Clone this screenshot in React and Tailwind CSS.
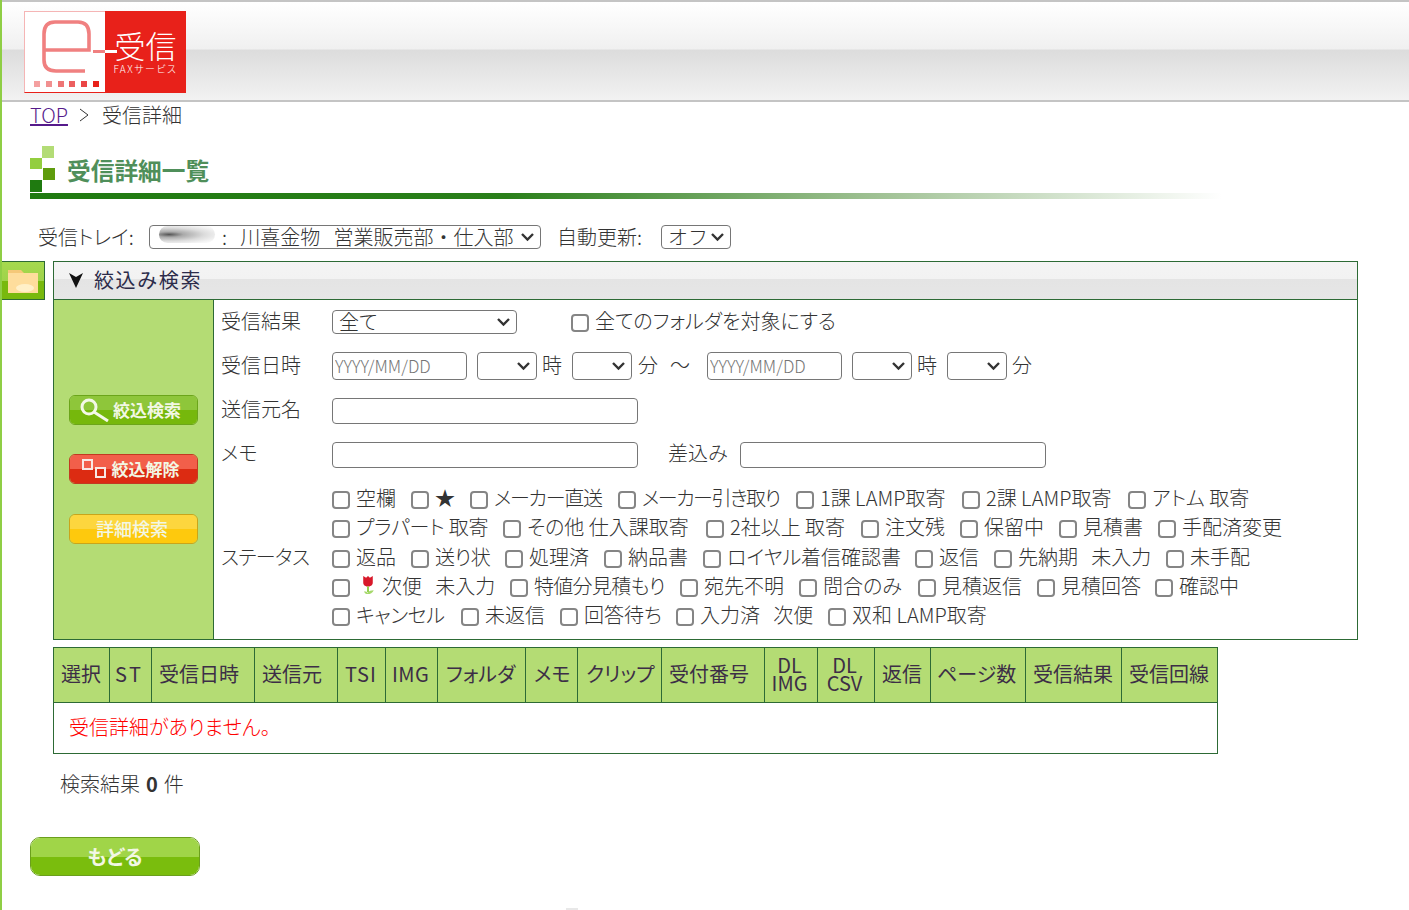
import React from "react";

const jp = "[font-family:'Noto_Sans_CJK_JP','Noto_Sans_CJK_SC',sans-serif] [font-feature-settings:'palt']";

function Sel({ w, children, h = "h-[24px]", pl = "pl-[6px]", cls = "" }) {
  return (
    <span className={`relative inline-flex shrink-0 ${w} ${h}`}>
      <select className={`w-full h-full appearance-none bg-white border border-[#767676] rounded-[4px] ${pl} ${cls} text-[20px] leading-none text-[#333]`}>
        {children}
      </select>
      <svg className="absolute right-[7px] top-1/2 -translate-y-1/2 w-[13px] h-[9px] pointer-events-none" viewBox="0 0 13 9" fill="none" stroke="#333" strokeWidth="2.4">
        <path d="M1 1.5 L6.5 7 L12 1.5" />
      </svg>
    </span>
  );
}

function Check({ label, gap = "gap-[6px]" }) {
  return (
    <label className={`flex items-center ${gap} whitespace-pre`}>
      <input type="checkbox" className="appearance-none w-[18px] h-[18px] mt-[4px] border-2 border-[#858585] rounded-[4px] bg-white shrink-0" />
      {label}
    </label>
  );
}

function Tulip() {
  return (
    <svg viewBox="0 0 14 22" className="w-[14px] h-[21px]">
      <path d="M2 1 L5 3 L7 1 L9 3 L12 1 L12 8 C12 11 9 12 7 12 C5 12 2 11 2 8 Z" fill="#d8192a" />
      <rect x="6" y="12" width="2" height="6" fill="#8fce45" />
      <path d="M7 20 C9 20 12 19 13 16 C10 16 8 17 7 18 Z" fill="#a5d86a" />
      <path d="M7 20 C5 20 3 19 3 17 C5 17 6 18 7 19 Z" fill="#a5d86a" />
    </svg>
  );
}

const rows = [
  [["空欄", "w-[79px]"], ["★", "w-[59px]"], ["メーカー直送", "w-[148px]", "tracking-[-1.3px]"], ["メーカー引き取り", "w-[178px]", "tracking-[-1.5px]"], ["1課 LAMP取寄", "w-[166px]"], ["2課 LAMP取寄", "w-[166px]"], ["アトム 取寄", "w-[130px]"]],
  [["プラパート 取寄", "w-[171px]", "tracking-[-0.2px]"], ["その他 仕入課取寄", "w-[203px]"], ["2社以上 取寄", "w-[155px]"], ["注文残", "w-[99px]"], ["保留中", "w-[99px]"], ["見積書", "w-[99px]"], ["手配済変更", "w-[130px]"]],
  [["返品", "w-[79px]"], ["送り状", "w-[94px]", "tracking-[-0.5px]"], ["処理済", "w-[99px]"], ["納品書", "w-[99px]"], ["ロイヤル着信確認書", "w-[212px]"], ["返信", "w-[79px]"], ["先納期   未入力", "w-[172px]"], ["未手配", "w-[90px]"]],
  [["TULIP", "w-[178px]"], ["特値分見積もり", "w-[170px]", "tracking-[-0.7px]"], ["宛先不明", "w-[119px]"], ["問合のみ", "w-[119px]"], ["見積返信", "w-[119px]"], ["見積回答", "w-[118px]"], ["確認中", "w-[90px]"]],
  [["キャンセル", "w-[129px]", "tracking-[-0.4px]"], ["未返信", "w-[99px]"], ["回答待ち", "w-[116px]"], ["入力済   次便", "w-[152px]"], ["双和 LAMP取寄", "w-[170px]"]],
];

const cols = [
  ["選択", "w-[56px] pl-[7px] justify-start"],
  ["ST", "w-[42px] pl-[5px] justify-start tracking-[2.5px]"],
  ["受信日時", "w-[103px] pl-[7px] justify-start"],
  ["送信元", "w-[83px] pl-[7px] justify-start"],
  ["TSI", "w-[48px] pl-[7px] justify-start tracking-[1px]"],
  ["IMG", "w-[52px] pl-[6px] justify-start tracking-[0.5px]"],
  ["フォルダ", "w-[88px] pl-[8px] justify-start"],
  ["メモ", "w-[52px] pl-[8px] justify-start"],
  ["クリップ", "w-[84px] pl-[8px] justify-start"],
  ["受付番号", "w-[103px] pl-[7px] justify-start"],
  ["DL\nIMG", "w-[53px] justify-center pr-[3px]"],
  ["DL\nCSV", "w-[57px] justify-center pr-[3px]"],
  ["返信", "w-[56px] pl-[7px] justify-start"],
  ["ページ数", "w-[95px] pl-[6px] justify-start"],
  ["受信結果", "w-[96px] pl-[7px] justify-start"],
  ["受信回線", "w-[96px] pl-[7px] justify-start"],
];

function GlossBtn({ w, h, top, bottom, border, children, cls = "", inner = "" }) {
  return (
    <button className={`relative flex items-center justify-center ${w} ${h} rounded-[6px] border ${border} overflow-hidden ${cls}`}>
      <span className={`absolute inset-x-0 top-0 h-1/2 ${top}`} />
      <span className={`absolute inset-x-0 bottom-0 h-1/2 ${bottom}`} />
      <span className={`relative flex items-center justify-center font-bold text-[#f2f7e4] ${inner}`}>{children}</span>
    </button>
  );
}

export default function App() {
  return (
    <div className={`${jp} relative w-[1409px] h-[910px] overflow-hidden bg-white border-l-2 border-[#8fce45] text-[20px] leading-[28px] text-[#333] font-light`}>
      {/* header */}
      <div className="h-[102px] border-t-2 border-b-2 border-[#c4c4c4] bg-[linear-gradient(#ffffff_0%,#f0f0f0_48%,#dcdcdc_49%,#f2f2f2_100%)] pt-[9px] pl-[22px]">
        <div className="relative flex w-[162px] h-[82px]">
          <div className="relative w-[81px] h-[82px] bg-white border border-[#f5b5b5] border-r-0 border-b-[#e8211a]">
            <svg viewBox="0 0 80 80" className="absolute inset-0 w-[80px] h-[80px]" fill="none">
              <path d="M19 38 H64 V22 Q64 10 53 10 H30 Q19 10 19 22 V48 Q19 59 31 59 H60" stroke="#f08080" strokeWidth="3.6" />
              <rect x="9" y="69" width="6" height="6" fill="#f4a0a0" />
              <rect x="21" y="69" width="6" height="6" fill="#f19090" />
              <rect x="33" y="69" width="6" height="6" fill="#ee7575" />
              <rect x="44" y="69" width="6" height="6" fill="#ec5f5f" />
              <rect x="56" y="69" width="6" height="6" fill="#ea4545" />
              <rect x="68" y="69" width="6" height="6" fill="#e8211a" />
            </svg>
          </div>
          <div className="w-[81px] h-[82px] bg-[#e8211a] text-white flex flex-col items-center pt-[18px]">
            <span className="text-[31px] leading-[32px] whitespace-nowrap [font-feature-settings:normal]">受信</span>
            <span className="text-[10px] leading-[12px] tracking-[1.5px] mt-[2px] whitespace-nowrap">FAXサービス</span>
          </div>
          <svg viewBox="0 0 24 3" className="absolute left-[69px] top-[39px] w-[24px] h-[3px]">
            <rect x="0" y="0" width="12" height="3" fill="#f08080" />
            <rect x="12" y="0" width="12" height="3" fill="#ffffff" />
          </svg>
        </div>
      </div>

      {/* breadcrumb */}
      <div className="flex items-center h-[28px] pl-[28px] pb-[2px]">
        <a className="text-[#551a8b] underline">TOP</a>
        <svg viewBox="0 0 12 16" className="w-[12px] h-[16px] ml-[10px] mr-[12px]" fill="none" stroke="#333" strokeWidth="1"><path d="M2 2 L10 8 L2 14" /></svg>
        <span>受信詳細</span>
      </div>

      {/* title */}
      <div className="relative ml-[28px] mt-[16px] h-[56px] w-[1192px]">
        <div className="flex items-center h-[48px] pl-[37px] pb-[1px]">
          <span className="text-[23.7px] font-bold text-[#4f8f5a] [font-feature-settings:normal]">受信詳細一覧</span>
        </div>
        <svg viewBox="0 0 26 46" className="absolute left-0 top-0 w-[26px] h-[46px]">
          <rect x="12" y="0" width="12" height="12" fill="#b3dc76" />
          <rect x="0" y="12" width="12" height="11" fill="#93ce3f" />
          <rect x="13" y="22" width="12" height="12" fill="#5f9c0d" />
          <rect x="0" y="34" width="12" height="12" fill="#1f7a10" />
        </svg>
        <div className="absolute left-0 top-[47px] right-0 h-[6px] bg-[linear-gradient(90deg,#1f7a10_0%,#2a7f1a_40%,#9cbf90_70%,#ffffff_100%)]" />
      </div>

      {/* tray */}
      <div className="flex items-center h-[28px] mt-[21px] pl-[36px]">
        <span className="w-[111px] whitespace-pre">受信トレイ:</span>
        <span className="relative">
          <Sel w="w-[392px]" pl="pl-[72px]" cls="[font-feature-settings:normal]">
            <option>{":\u00a0\u00a0\u00a0川喜金物\u00a0\u00a0\u00a0営業販売部・仕入部"}</option>
          </Sel>
          <span className="absolute left-[10px] top-[3px] w-[56px] h-[17px] rounded-full bg-[radial-gradient(ellipse_at_18%_50%,#555_0%,#aaa_22%,#ddd_55%,#f4f4f4_80%,#fff_100%)]" />
        </span>
        <span className="ml-[16px] w-[104px] whitespace-pre">自動更新:</span>
        <Sel w="w-[70px]" cls="[font-feature-settings:normal]"><option>オフ</option></Sel>
      </div>

      {/* search panel */}
      <div className="relative mt-[10px] ml-[51px] w-[1305px] border border-[#2d6a35]">
        <div className="absolute left-[-52px] top-[-1px] w-[43px] h-[39px] border border-[#2d6a35] border-l-0 bg-[linear-gradient(#a5d94e_0%,#9fd34a_50%,#78b90d_51%,#78b90d_100%)] flex items-center justify-center">
          <svg viewBox="0 0 30 24" className="w-[30px] h-[24px]">
            <path d="M0 1 H13 L16 4 H30 V24 H0 Z" fill="#f5c878" />
            <rect x="0" y="4" width="30" height="20" fill="#fedd9c" />
            <ellipse cx="17" cy="19" rx="9" ry="4" fill="#fff0c8" />
          </svg>
        </div>
        <div className="flex items-center h-[38px] pb-[2px] border-b border-[#2d6a35] bg-[linear-gradient(#f4f4f4_0%,#f2f2f2_45%,#e4e4e4_46%,#e6e6e6_100%)] pl-[15px] gap-[11px]">
          <svg viewBox="0 0 14 16" className="w-[14px] h-[16px]"><path d="M0 1 L7 5 L14 1 L7 16 Z" fill="#111" /></svg>
          <span className="tracking-[1.6px] font-normal text-[#2c2c4a] [font-feature-settings:normal]">絞込み検索</span>
        </div>
        <div className="flex h-[339px]">
          <div className="w-[160px] shrink-0 bg-[#b4dc74] border-r border-[#2d6a35] flex flex-col items-center pt-[95px]">
            <GlossBtn w="w-[129px]" h="h-[30px]" top="bg-[#8ec63a]" bottom="bg-[#76b80c]" border="border-[#6ba51a]" cls="text-[17px]" inner="pr-[6px]">
              <svg viewBox="0 0 30 24" className="w-[30px] h-[24px] mr-[3px]" fill="none" stroke="#f4f8e8" strokeWidth="3"><circle cx="9" cy="9" r="7" /><path d="M14 14 L28 23" /></svg>
              絞込検索
            </GlossBtn>
            <GlossBtn w="w-[129px]" h="h-[30px]" top="bg-[#f25f4a]" bottom="bg-[#dc2b12]" border="border-[#c23a22]" cls="mt-[29px] text-[17px]" inner="pr-[6px]">
              <svg viewBox="0 0 26 22" className="w-[26px] h-[22px] mr-[4px]" fill="none" stroke="#f8e8e4" strokeWidth="2"><rect x="1" y="2" width="9" height="9" /><rect x="14" y="10" width="9" height="9" /></svg>
              絞込解除
            </GlossBtn>
            <GlossBtn w="w-[129px]" h="h-[30px]" top="bg-[#fdd63e]" bottom="bg-[#fec90d]" border="border-[#c9a51a]" cls="mt-[30px] text-[18px]" inner="font-medium pb-[3px] pr-[3px]">
              詳細検索
            </GlossBtn>
          </div>
          <div className="flex-1 relative pl-[7px] pt-[7px]">
            <div className="flex items-center h-[28px]">
              <span className="w-[111px]">受信結果</span>
              <Sel w="w-[185px] mt-[2px]"><option>全て</option></Sel>
              <span className="ml-[54px] flex"><Check label="全てのフォルダを対象にする" gap="gap-[6px]" /></span>
            </div>
            <div className="flex items-center h-[28px] mt-[16px]">
              <span className="w-[111px]">受信日時</span>
              <input placeholder="YYYY/MM/DD" className="w-[135px] h-[28px] mt-[2px] border border-[#767676] rounded-[4px] pl-[2px] text-[17px] placeholder:text-[#757575]" />
              <span className="ml-[10px] mt-[2px] flex"><Sel w="w-[60px]" h="h-[28px]"><option></option></Sel></span>
              <span className="ml-[5px] w-[30px]">時</span>
              <Sel w="w-[60px] mt-[2px]" h="h-[28px]"><option></option></Sel>
              <span className="ml-[6px] w-[32px]">分</span>
              <span className="w-[37px]">～</span>
              <input placeholder="YYYY/MM/DD" className="w-[135px] h-[28px] mt-[2px] border border-[#767676] rounded-[4px] pl-[2px] text-[17px] placeholder:text-[#757575]" />
              <span className="ml-[10px] mt-[2px] flex"><Sel w="w-[60px]" h="h-[28px]"><option></option></Sel></span>
              <span className="ml-[5px] w-[30px]">時</span>
              <Sel w="w-[60px] mt-[2px]" h="h-[28px]"><option></option></Sel>
              <span className="ml-[5px]">分</span>
            </div>
            <div className="flex items-center h-[28px] mt-[16px]">
              <span className="w-[111px]">送信元名</span>
              <input className="w-[306px] h-[26px] mt-[4px] border border-[#767676] rounded-[4px]" />
            </div>
            <div className="flex items-center h-[28px] mt-[16px]">
              <span className="w-[111px]">メモ</span>
              <input className="w-[306px] h-[26px] mt-[4px] border border-[#767676] rounded-[4px]" />
              <span className="ml-[30px] w-[72px]">差込み</span>
              <input className="w-[306px] h-[26px] mt-[4px] border border-[#767676] rounded-[4px]" />
            </div>
            <div className="flex items-center mt-[17px]">
              <span className="w-[111px] shrink-0 tracking-[-0.6px]">ステータス</span>
              <div className="flex flex-col gap-[1.25px]">
                {rows.map((r, i) => (
                  <div key={i} className="flex h-[28px]">
                    {r.map(([t, w, tr = ""], j) => (
                      <span key={j} className={`flex shrink-0 ${w}`}>
                        {t === "TULIP" ? (
                          <Check gap="gap-[11px]" label={<span className="flex items-center gap-[7px]"><Tulip />{"次便   未入力"}</span>} />
                        ) : (
                          <Check label={<span className={tr}>{t}</span>} />
                        )}
                      </span>
                    ))}
                  </div>
                ))}
              </div>
            </div>
          </div>
        </div>
      </div>

      {/* table */}
      <div className="ml-[51px] mt-[7px] w-[1165px] border border-[#2d6a35]">
        <div className="flex h-[55px] bg-[#b4dc74] border-b border-[#2d6a35] text-[#3c2e46] font-normal">
          {cols.map(([c, w], i) => (
            <div key={i} className={`flex items-center text-center whitespace-pre leading-[18px] pb-[2px] shrink-0 ${w} ${i < cols.length - 1 ? "border-r border-[#2d6a35]" : ""}`}>
              {c}
            </div>
          ))}
        </div>
        <div className="h-[50px] flex items-center pl-[15px] pb-[3px] text-[#ff0000]">受信詳細がありません。</div>
      </div>

      <div className="ml-[58px] mt-[16px] flex">
        <span>検索結果</span>
        <span className="font-bold ml-[6px] mr-[6px]">0</span>
        <span>件</span>
      </div>

      <div className="ml-[28px] mt-[39px]">
        <GlossBtn w="w-[170px]" h="h-[39px]" top="bg-[#a0d548]" bottom="bg-[#7abd0d]" border="border-[#6b9f1c]" cls="rounded-[10px]">
          もどる
        </GlossBtn>
      </div>

      <span className="absolute left-[564px] bottom-0 w-[12px] h-[2px] bg-[#e8e8e8]" />
    </div>
  );
}
